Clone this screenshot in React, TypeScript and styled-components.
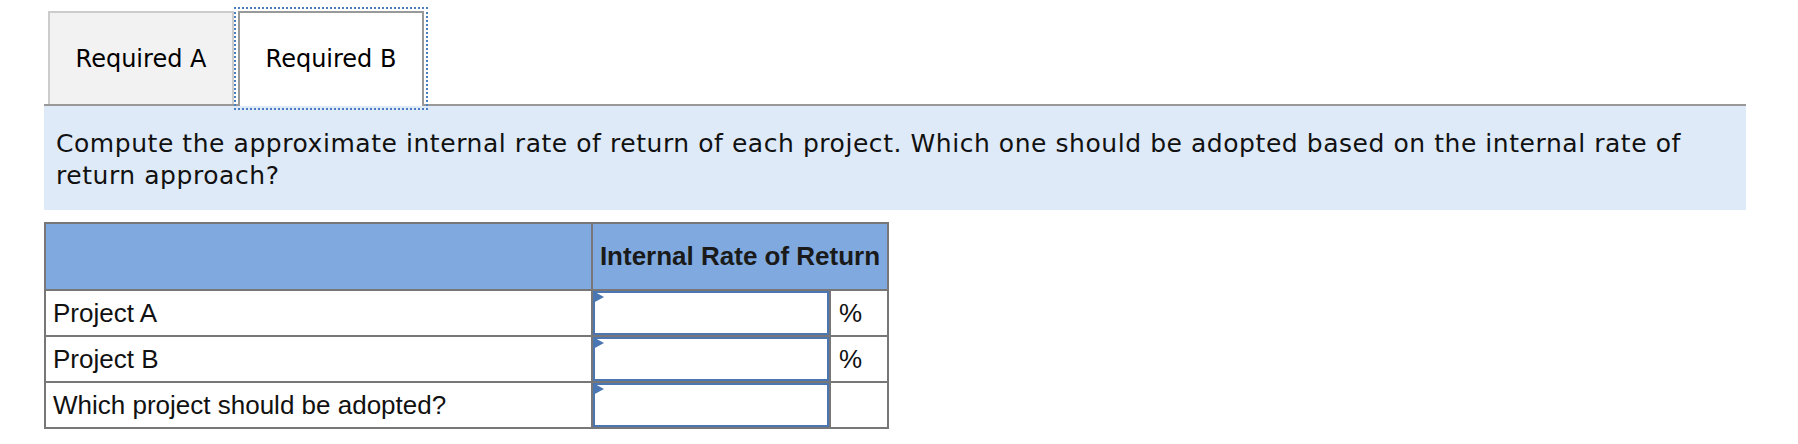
import React from 'react';
import styled, { createGlobalStyle } from 'styled-components';

const GlobalStyle = createGlobalStyle`
  html, body {
    margin: 0;
    padding: 0;
    background: #ffffff;
  }
`;

interface Row {
  label: string;
  unit: string;
}

const rows: Row[] = [
  { label: 'Project A', unit: '%' },
  { label: 'Project B', unit: '%' },
  { label: 'Which project should be adopted?', unit: '' }
];

const App: React.FC = () => {
  return (
    <>
      <GlobalStyle />
      <Page>
        <TabList>
          <Tab>Required A</Tab>
          <Tab $active>Required B</Tab>
        </TabList>

        <Question>
          Compute the approximate internal rate of return of each project. Which one should be adopted based on the internal rate of return approach?
        </Question>

        <AnswerTable>
          <colgroup>
            <col style={{ width: 547 }} />
            <col style={{ width: 238 }} />
            <col style={{ width: 58 }} />
          </colgroup>
          <thead>
            <tr>
              <HeadCell />
              <HeadCell colSpan={2}>Internal Rate of Return</HeadCell>
            </tr>
          </thead>
          <tbody>
            {rows.map((row) => (
              <tr key={row.label}>
                <LabelCell>{row.label}</LabelCell>
                <InputCell>
                  <InputBox>
                    <Marker />
                  </InputBox>
                </InputCell>
                <UnitCell>{row.unit}</UnitCell>
              </tr>
            ))}
          </tbody>
        </AnswerTable>
      </Page>
    </>
  );
};

export default App;

const Page = styled.div`
  width: 1702px;
  margin-left: 44px;
  padding-top: 11px;
  padding-bottom: 17px;
`;

const TabList = styled.div`
  display: flex;
  align-items: flex-end;
  gap: 4px;
  padding-left: 4px;
  border-bottom: 2px solid #999999;
`;

const Tab = styled.div<{ $active?: boolean }>`
  box-sizing: border-box;
  width: 186px;
  height: ${(p) => (p.$active ? '95px' : '93px')};
  margin-bottom: ${(p) => (p.$active ? '-2px' : '0')};
  display: flex;
  align-items: center;
  justify-content: center;
  padding-bottom: ${(p) => (p.$active ? '2px' : '0')};
  font-family: 'DejaVu Sans', Verdana, sans-serif;
  font-size: 24px;
  color: #000000;
  background: ${(p) => (p.$active ? '#ffffff' : '#f2f2f2')};
  border: 2px solid ${(p) => (p.$active ? '#999999' : '#cccccc')};
  border-bottom: none;
  outline: ${(p) => (p.$active ? '2px dotted #4a7ebf' : 'none')};
  outline-offset: 2px;
`;

const Question = styled.p`
  margin: 0;
  padding: 22px 12px 19px 12px;
  background: #deeaf8;
  font-family: 'DejaVu Sans', Verdana, sans-serif;
  font-size: 25px;
  letter-spacing: 0.55px;
  line-height: 31.5px;
  color: #111111;
`;

const AnswerTable = styled.table`
  margin-top: 12px;
  width: 843px;
  table-layout: fixed;
  border-collapse: collapse;
  font-family: 'Liberation Sans', Arial, sans-serif;
  font-size: 26px;
  color: #111111;

  td, th {
    border: 2px solid #777777;
  }
`;

const HeadCell = styled.th`
  height: 65px;
  padding: 0 2px;
  background: #80aadf;
  font-weight: bold;
  text-align: center;
  color: #1a1a1a;
  white-space: nowrap;
`;

const LabelCell = styled.td`
  height: 44px;
  padding: 0 7px;
  white-space: nowrap;
`;

const InputCell = styled.td`
  padding: 0;
  height: 44px;
`;

const InputBox = styled.div`
  position: relative;
  box-sizing: border-box;
  height: 44px;
  border: 2px solid #4b76b2;
  background: #ffffff;
`;

const Marker = styled.span`
  position: absolute;
  top: -2px;
  left: -2px;
  width: 0;
  height: 0;
  border-top: 6px solid transparent;
  border-bottom: 6px solid transparent;
  border-left: 11px solid #4a76b2;
`;

const UnitCell = styled.td`
  padding: 0 8px;
  height: 44px;
`;
